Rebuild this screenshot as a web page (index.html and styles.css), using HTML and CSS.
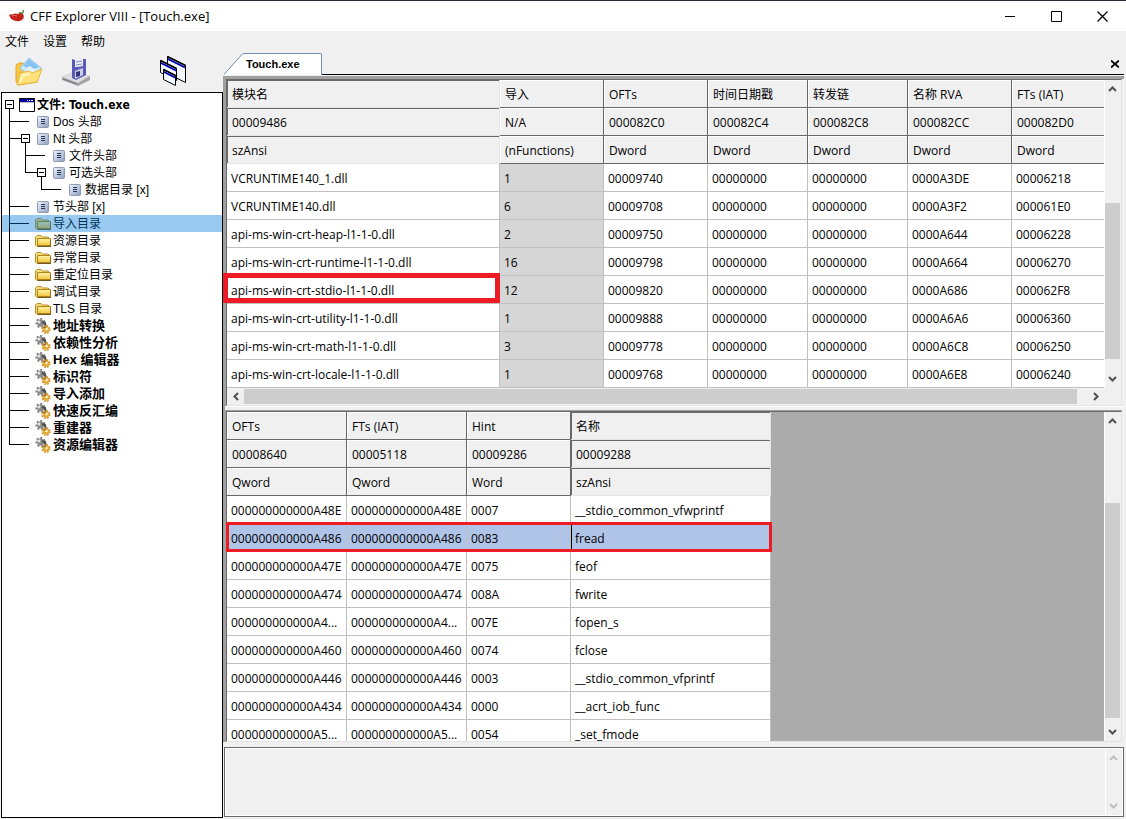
FILE: index.html
```html
<!DOCTYPE html>
<html lang="zh-CN">
<head>
<meta charset="utf-8">
<title>CFF Explorer VIII - [Touch.exe]</title>
<link rel="stylesheet" href="styles.css">
</head>
<body>
<svg class="defs" aria-hidden="true">
  <defs>
    <linearGradient id="docFill" x1="0" y1="0" x2="1" y2="1"><stop offset="0" stop-color="#f4f7fc"/><stop offset="1" stop-color="#8d9dbc"/></linearGradient>
    <linearGradient id="foldFill" x1="0" y1="0" x2="0" y2="1"><stop offset="0" stop-color="#fff6a8"/><stop offset="1" stop-color="#f2c23c"/></linearGradient>
  </defs>
  <symbol id="window" viewBox="0 0 16 14"><path d="M.5.5h15v13H.5z" fill="#fff" stroke="#000"/><path d="M1 1h14v3H1z" fill="#0000a0"/><path d="M8 2h1v1H8zM10 2h1v1h-1zM12 2h2v1h-2z" fill="#fff"/><path d="M1 4h14v1H1z" fill="#c0c0c0"/></symbol>
  <symbol id="doc" viewBox="0 0 12 12"><rect x=".5" y=".5" width="11" height="11" rx="1" fill="url(#docFill)" stroke="#8c9ab6"/><path d="M4 3.500h4M4 5.500h4M4 7.500h4" stroke="#25355c"/></symbol>
  <symbol id="folder" viewBox="0 0 16 16"><path d="M.5 12V4L2 2.500h4L7.500 4H13l1 1v8.500H2z" fill="#f8dc78" stroke="#b8912c"/><path d="M2.500 12.500V5.500H15.500V12.500z" fill="url(#foldFill)" stroke="#b08416"/><path d="M3 13.500h13V7" fill="none" stroke="#6f5a24"/></symbol>
  <symbol id="gears" viewBox="0 0 16 16"><circle cx="5.500" cy="5" r="3.500" fill="#8a8a8a"/><circle cx="5.500" cy="5" r="4.200" fill="none" stroke="#808080" stroke-width="1.800" stroke-dasharray="2 1.800"/><circle cx="4" cy="4" r="1.500" fill="#e4e4e4"/><path d="M7 4l3 1 1 5" fill="none" stroke="#4c4c4c" stroke-width="2"/><circle cx="11" cy="11.500" r="3.300" fill="#e3aa3c"/><circle cx="11" cy="11.500" r="3.800" fill="none" stroke="#cf9428" stroke-width="1.600" stroke-dasharray="1.700 1.300"/><circle cx="11.500" cy="11" r="1.300" fill="#fff3c8"/><path d="M8 9l3 1" stroke="#7a6234"/></symbol>
  <symbol id="up" viewBox="0 0 9 6"><path d="M1 5 4.500 1.500 8 5" fill="none" stroke="currentColor" stroke-width="2"/></symbol>
  <symbol id="down" viewBox="0 0 9 6"><path d="M1 1 4.500 4.500 8 1" fill="none" stroke="currentColor" stroke-width="2"/></symbol>
  <symbol id="left" viewBox="0 0 6 9"><path d="M5 1 1.500 4.500 5 8" fill="none" stroke="currentColor" stroke-width="2"/></symbol>
  <symbol id="right" viewBox="0 0 6 9"><path d="M1 1 4.500 4.500 1 8" fill="none" stroke="currentColor" stroke-width="2"/></symbol>
</svg>

<header class="titlebar">
  <svg class="app-icon" width="16" height="14" viewBox="0 0 16 14" aria-hidden="true"><path d="M0 5q2 1 4 0 3-1 5 0 2-2 4-1 3 3 1 6-3 3-7 2Q1 11 0 5z" fill="#c32218"/><path d="M3 7q3-1 5 0" fill="none" stroke="#f0786c"/><path d="M10 4q2-1 4 1M13 4q2-1 1-3" fill="none" stroke="#73843f" stroke-width="1.500"/></svg>
  <h1>CFF Explorer VIII - [Touch.exe]</h1>
  <button type="button" aria-label="最小化"><svg width="10" height="11"><path d="M0 5.500h10" stroke="#000"/></svg></button>
  <button type="button" aria-label="最大化"><svg width="11" height="11"><path d="M.5.5h10v10h-10z" fill="none" stroke="#000"/></svg></button>
  <button type="button" aria-label="关闭"><svg width="11" height="11"><path d="M.5.5l10 10M10.500.5l-10 10" stroke="#000" stroke-width="1.200"/></svg></button>
</header>

<div class="workspace">
  <div class="side">
    <nav class="menu"><button type="button">文件</button><button type="button">设置</button><button type="button">帮助</button></nav>
    <div class="toolbar">
      <button type="button" aria-label="打开"><svg width="30" height="30" viewBox="0 0 30 30"><path d="M2 8l3-2h4l2 3 12 4v12L5 28 2 25z" fill="#f5c64a" stroke="#e1a72a"/><path d="M6 11 15 1l12 10-9 10z" fill="#cfeafc" stroke="#8cc2ec"/><path d="M9 9l6-7 10 8-6 3z" fill="#86c2f2"/><path d="M10 15l5-6 10 5-7 6z" fill="#e3f3fe"/><path d="M3 28 6 16l9-2 3 2 10-4-5 13z" fill="#ffe37a" stroke="#e8b437"/><path d="M6 25l3-7 7-1" fill="none" stroke="#fff8c8" stroke-width="2"/></svg></button>
      <button type="button" aria-label="保存"><svg width="30" height="30" viewBox="0 0 30 30"><path d="M1 20 12 15l17 4v4L17 29 1 23z" fill="#a2a2a6"/><path d="M1 20 12 15l17 4-12 7z" fill="#dededf"/><path d="M2 22l14 5" stroke="#777"/><path d="M11 2l3 1v7l8-1V2h3v16l-10 5-4-2z" fill="#5959b8"/><path d="M14 3l8-1v7l-8 1z" fill="#e8ebf5"/><path d="M15 5l6-1M15 8l6-1" stroke="#8a8fc0"/><path d="M14 14l8-3v7l-8 4z" fill="#ccd0e4"/><path d="M15 15l4-1v5l-4 1z" fill="#34347c"/></svg></button>
      <button type="button" class="cascade" aria-label="层叠窗口"><svg width="28" height="31" viewBox="0 0 28 31"><path d="M8.500.5 26.500 9.500V26.500L8.500 17.500z" fill="#f4f8ff" stroke="#000"/><path d="M9 2l17 8.500v2L9 4z" fill="#0000b0"/><path d="M1.500 4.500 17.500 12.500V24.500L1.500 16.500z" fill="#f4f8ff" stroke="#000"/><path d="M2 6l15 7.500v2L2 8z" fill="#0000b0"/><path d="M4.500 13.500 16.500 19.500V29.500L4.500 23.500z" fill="#f4f8ff" stroke="#000"/><path d="M5 15l11 5.500v2L5 17z" fill="#0000b0"/><path d="M8.500.5l18 9M1.500 4.500l16 8M4.500 13.500l12 6" stroke="#000" stroke-width="1.500"/></svg></button>
    </div>
    <nav class="tree" aria-label="文件结构">
      <div class="node root"><button type="button" class="toggle" aria-label="折叠"></button><svg class="ico win"><use href="#window"/></svg><a href="#">文件: Touch.exe</a></div>
      <ul>
        <li><div class="node"><svg class="ico doc"><use href="#doc"/></svg><a href="#">Dos 头部</a></div></li>
        <li><div class="node"><button type="button" class="toggle" aria-label="折叠"></button><svg class="ico doc"><use href="#doc"/></svg><a href="#">Nt 头部</a></div>
          <ul>
            <li><div class="node"><svg class="ico doc"><use href="#doc"/></svg><a href="#">文件头部</a></div></li>
            <li><div class="node"><button type="button" class="toggle" aria-label="折叠"></button><svg class="ico doc"><use href="#doc"/></svg><a href="#">可选头部</a></div>
              <ul><li><div class="node"><svg class="ico doc"><use href="#doc"/></svg><a href="#">数据目录 [x]</a></div></li></ul>
            </li>
          </ul>
        </li>
        <li><div class="node"><svg class="ico doc"><use href="#doc"/></svg><a href="#">节头部 [x]</a></div></li>
        <li><div class="node selected"><svg class="ico"><use href="#folder"/></svg><a href="#" aria-current="true">导入目录</a></div></li>
        <li><div class="node"><svg class="ico"><use href="#folder"/></svg><a href="#">资源目录</a></div></li>
        <li><div class="node"><svg class="ico"><use href="#folder"/></svg><a href="#">异常目录</a></div></li>
        <li><div class="node"><svg class="ico"><use href="#folder"/></svg><a href="#">重定位目录</a></div></li>
        <li><div class="node"><svg class="ico"><use href="#folder"/></svg><a href="#">调试目录</a></div></li>
        <li><div class="node"><svg class="ico"><use href="#folder"/></svg><a href="#">TLS 目录</a></div></li>
        <li><div class="node tool"><svg class="ico"><use href="#gears"/></svg><a href="#">地址转换</a></div></li>
        <li><div class="node tool"><svg class="ico"><use href="#gears"/></svg><a href="#">依赖性分析</a></div></li>
        <li><div class="node tool"><svg class="ico"><use href="#gears"/></svg><a href="#">Hex 编辑器</a></div></li>
        <li><div class="node tool"><svg class="ico"><use href="#gears"/></svg><a href="#">标识符</a></div></li>
        <li><div class="node tool"><svg class="ico"><use href="#gears"/></svg><a href="#">导入添加</a></div></li>
        <li><div class="node tool"><svg class="ico"><use href="#gears"/></svg><a href="#">快速反汇编</a></div></li>
        <li><div class="node tool"><svg class="ico"><use href="#gears"/></svg><a href="#">重建器</a></div></li>
        <li><div class="node tool"><svg class="ico"><use href="#gears"/></svg><a href="#">资源编辑器</a></div></li>
      </ul>
    </nav>
  </div>

  <main class="content">
    <div class="tabs">
      <button type="button" class="tab"><svg class="slope" width="20" height="22" viewBox="0 0 20 22" aria-hidden="true"><path d="M0 22 18 2Q19 .5 20 .5V22z" fill="#fff"/><path d="M0 21.500 17 2.500Q18.500.5 20 .5" fill="none" stroke="#6f8fae"/></svg><span>Touch.exe</span></button>
      <div class="strip"><button type="button" aria-label="关闭标签"><svg width="8" height="8"><path d="M0 .5l8 7M8 .5l-8 7" stroke="#000" stroke-width="1.800"/></svg></button></div>
    </div>
    <div class="panes">
      <section class="pane modules">
        <div class="view">
          <table>
            <colgroup><col class="w-name"><col class="w-104"><col class="w-104"><col class="w-100"><col class="w-100"><col class="w-104"><col></colgroup>
            <thead>
              <tr><th class="sunk">模块名</th><th>导入</th><th>OFTs</th><th>时间日期戳</th><th>转发链</th><th>名称 RVA</th><th>FTs (IAT)</th></tr>
              <tr><th class="sunk">00009486</th><th>N/A</th><th>000082C0</th><th>000082C4</th><th>000082C8</th><th>000082CC</th><th>000082D0</th></tr>
              <tr><th class="sunk">szAnsi</th><th>(nFunctions)</th><th>Dword</th><th>Dword</th><th>Dword</th><th>Dword</th><th>Dword</th></tr>
            </thead>
            <tbody>
              <tr><td>VCRUNTIME140_1.dll</td><td>1</td><td>00009740</td><td>00000000</td><td>00000000</td><td>0000A3DE</td><td>00006218</td></tr>
              <tr><td>VCRUNTIME140.dll</td><td>6</td><td>00009708</td><td>00000000</td><td>00000000</td><td>0000A3F2</td><td>000061E0</td></tr>
              <tr><td>api-ms-win-crt-heap-l1-1-0.dll</td><td>2</td><td>00009750</td><td>00000000</td><td>00000000</td><td>0000A644</td><td>00006228</td></tr>
              <tr><td>api-ms-win-crt-runtime-l1-1-0.dll</td><td>16</td><td>00009798</td><td>00000000</td><td>00000000</td><td>0000A664</td><td>00006270</td></tr>
              <tr><td class="marked">api-ms-win-crt-stdio-l1-1-0.dll</td><td>12</td><td>00009820</td><td>00000000</td><td>00000000</td><td>0000A686</td><td>000062F8</td></tr>
              <tr><td>api-ms-win-crt-utility-l1-1-0.dll</td><td>1</td><td>00009888</td><td>00000000</td><td>00000000</td><td>0000A6A6</td><td>00006360</td></tr>
              <tr><td>api-ms-win-crt-math-l1-1-0.dll</td><td>3</td><td>00009778</td><td>00000000</td><td>00000000</td><td>0000A6C8</td><td>00006250</td></tr>
              <tr><td>api-ms-win-crt-locale-l1-1-0.dll</td><td>1</td><td>00009768</td><td>00000000</td><td>00000000</td><td>0000A6E8</td><td>00006240</td></tr>
            </tbody>
          </table>
        </div>
        <div class="vbar"><svg class="arrow-v"><use href="#up"/></svg><div class="track"><div class="thumb"></div></div><svg class="arrow-v"><use href="#down"/></svg></div>
        <div class="hbar"><svg class="arrow-h"><use href="#left"/></svg><div class="track"><div class="thumb"></div></div><svg class="arrow-h"><use href="#right"/></svg></div>
      </section>
      <div class="splitter"></div>
      <section class="pane functions">
        <div class="view">
          <table>
            <colgroup><col class="w-120"><col class="w-120"><col class="w-104"><col class="w-200"></colgroup>
            <thead>
              <tr><th>OFTs</th><th>FTs (IAT)</th><th>Hint</th><th class="sunk">名称</th></tr>
              <tr><th>00008640</th><th>00005118</th><th>00009286</th><th class="sunk">00009288</th></tr>
              <tr><th>Qword</th><th>Qword</th><th>Word</th><th class="sunk">szAnsi</th></tr>
            </thead>
            <tbody>
              <tr><td>000000000000A48E</td><td>000000000000A48E</td><td>0007</td><td>__stdio_common_vfwprintf</td></tr>
              <tr class="current"><td>000000000000A486</td><td>000000000000A486</td><td>0083</td><td>fread</td></tr>
              <tr><td>000000000000A47E</td><td>000000000000A47E</td><td>0075</td><td>feof</td></tr>
              <tr><td>000000000000A474</td><td>000000000000A474</td><td>008A</td><td>fwrite</td></tr>
              <tr><td>000000000000A4...</td><td>000000000000A4...</td><td>007E</td><td>fopen_s</td></tr>
              <tr><td>000000000000A460</td><td>000000000000A460</td><td>0074</td><td>fclose</td></tr>
              <tr><td>000000000000A446</td><td>000000000000A446</td><td>0003</td><td>__stdio_common_vfprintf</td></tr>
              <tr><td>000000000000A434</td><td>000000000000A434</td><td>0000</td><td>__acrt_iob_func</td></tr>
              <tr><td>000000000000A5...</td><td>000000000000A5...</td><td>0054</td><td>_set_fmode</td></tr>
            </tbody>
          </table>
        </div>
        <div class="vbar"><svg class="arrow-v"><use href="#up"/></svg><div class="track"><div class="thumb"></div></div><svg class="arrow-v"><use href="#down"/></svg></div>
      </section>
    </div>
    <div class="log">
      <textarea readonly aria-label="输出"></textarea>
      <div class="vbar off"><svg class="arrow-v"><use href="#up"/></svg><div class="track"></div><svg class="arrow-v"><use href="#down"/></svg></div>
    </div>
  </main>
</div>
</body>
</html>
```

FILE: styles.css
```css
* { box-sizing: border-box; }

body {
  margin: 0;
  height: 100vh;
  display: flex;
  flex-direction: column;
  overflow: hidden;
  background: #f0f0f0;
  color: #000;
  border-top: 1px solid #2b2b3a;
  font: 12px/16px "Open Sans", "Noto Sans CJK SC", sans-serif;
}

button {
  margin: 0;
  padding: 0;
  border: 0;
  background: none;
  color: inherit;
  font: inherit;
}

a { color: inherit; text-decoration: none; }
svg { display: block; flex: none; }
.defs { position: absolute; width: 0; height: 0; }

/* Title bar */
.titlebar {
  display: flex;
  align-items: center;
  height: 30px;
  padding: 0 1px 0 9px;
  background: #fff;
}
.titlebar h1 {
  flex: 1;
  margin: 0 0 0 5px;
  font-size: 13px;
  font-weight: 400;
}
.titlebar button {
  display: grid;
  place-items: center;
  width: 46px;
  height: 30px;
}

.workspace {
  flex: 1;
  min-height: 0;
  display: grid;
  grid-template-columns: 223px minmax(0, 1fr);
}

/* Left side */
.side {
  display: flex;
  flex-direction: column;
  min-height: 0;
  padding: 0 0 1px 1px;
}
.menu {
  display: flex;
  gap: 14px;
  height: 20px;
  padding-left: 4px;
  font-family: "Noto Sans CJK SC", sans-serif;
}
.toolbar {
  display: flex;
  align-items: center;
  gap: 17px;
  height: 41px;
  padding-left: 13px;
}
.toolbar .cascade { margin-left: 51px; }

.tree {
  flex: 1;
  min-height: 0;
  overflow: hidden;
  padding-top: 3px;
  border: 1px solid #000;
  background: #fff;
  font-family: "Liberation Sans", "Noto Sans CJK SC", sans-serif;
}
.tree ul { margin: 0; padding: 0; list-style: none; }
.tree > ul { margin-left: 7px; }
.tree ul ul { margin-left: 16px; }
.tree li { position: relative; }
.tree li::before {
  content: "";
  position: absolute;
  left: 0;
  top: -4px;
  bottom: 0;
  border-left: 1px solid #000;
}
.tree li:last-child::before { bottom: auto; height: 13px; }
.node {
  position: relative;
  display: flex;
  align-items: center;
  gap: 2px;
  height: 17px;
  padding-left: 26px;
  white-space: nowrap;
}
.node a { padding-top: 1px; }
.node::before {
  content: "";
  position: absolute;
  left: 0;
  top: 8px;
  width: 20px;
  border-top: 1px solid #000;
}
.node .toggle {
  position: absolute;
  left: 12px;
  top: 4px;
  width: 9px;
  height: 9px;
  border: 1px solid #000;
  background: linear-gradient(#000, #000) center / 5px 1px no-repeat #fff;
}
.node.root {
  gap: 2px;
  padding-left: 17px;
  font-family: "DejaVu Sans Condensed", "Noto Sans CJK SC", sans-serif;
  font-weight: 700;
}
.node.root::before { display: none; }
.node.root .toggle { left: 3px; }
.node.tool {
  font-size: 13px;
  font-weight: 700;
}
.node.selected::after {
  content: "";
  position: absolute;
  inset: 0 0 0 -7px;
  background: rgba(0, 120, 215, .4);
}
.ico { width: 16px; height: 16px; }
.ico.win { height: 14px; }
.ico.doc { height: 12px; }

/* Right side */
.content {
  display: flex;
  flex-direction: column;
  min-width: 0;
  min-height: 0;
  padding: 22px 2px 2px 0;
}
.tabs { display: flex; height: 23px; }
.tab {
  display: flex;
  padding-left: 1px;
  font: 700 11px/20px "Liberation Sans", sans-serif;
}
.tab span {
  height: 22px;
  padding: 0 21px 0 2px;
  border-top: 1px solid #6f8fae;
  border-right: 1px solid #6f8fae;
  border-top-right-radius: 2px;
  background: #fff;
}
.strip {
  flex: 1;
  display: flex;
  justify-content: flex-end;
  align-items: center;
  height: 22px;
  padding-right: 5px;
  border-bottom: 1px solid #000;
}

.panes {
  flex: 1;
  min-height: 0;
  display: flex;
  flex-direction: column;
  border: solid #a0a0a0;
  border-width: 3px 0 0 3px;
}
.pane {
  display: grid;
  grid-template-columns: minmax(0, 1fr) 17px;
  margin-right: 2px;
  border: 1px solid #696969;
  border-right-color: #e3e3e3;
  border-bottom-color: #e3e3e3;
}
.hbar, .vbar {
  display: flex;
  align-items: center;
  background: #f0f0f0;
  color: #505050;
}
.hbar { height: 17px; gap: 5px; padding: 0 5px 0 6px; }
.vbar {
  flex-direction: column;
  gap: 5px;
  min-height: 0;
  padding: 6px 0;
  box-shadow: inset 1px 0 #fff;
}
.track { flex: 1; min-width: 0; min-height: 0; }
.thumb { background: #cdcdcd; }
.vbar .thumb { width: 15px; }
.hbar .thumb { height: 15px; width: 98.7%; }
.arrow-v { width: 9px; height: 6px; }
.arrow-h { width: 6px; height: 9px; }
.modules .vbar .track,
.functions .vbar .track {
  display: flex;
  flex-direction: column;
  justify-content: flex-end;
}
.modules .vbar .thumb { height: 57%; margin-bottom: 12px; }
.functions .vbar .thumb { height: 73%; margin-bottom: 6px; }

.splitter {
  height: 4px;
  flex: none;
  margin-left: -1px;
  background: #f0f0f0;
  border-top: 1px solid #fff;
}
.functions {
  flex: 1;
  min-height: 0;
  grid-template-rows: minmax(0, 1fr);
  box-shadow: 0 -1px #a0a0a0;
  margin-top: 1px;
}
.functions .view {
  min-height: 0;
  background: #ababab;
  clip-path: inset(0 0 0 -4px);
}

table {
  table-layout: fixed;
  border-collapse: separate;
  border-spacing: 0;
}
.modules table { width: 100%; }
.functions table { width: 544px; }
.w-name { width: 273px; }
.w-100 { width: 100px; }
.w-104 { width: 104px; }
.w-120 { width: 120px; }
.w-200 { width: 200px; }
th, td {
  height: 28px;
  padding: 2px 0 0 4px;
  text-align: left;
  font-weight: 400;
  white-space: nowrap;
}
th {
  padding-left: 5px;
  border: solid #696969;
  border-width: 0 1px 1px 0;
  background: #f0f0f0;
  box-shadow: inset 1px 1px #fff;
}
th.sunk {
  border-color: #e3e3e3;
  box-shadow: inset 1px 1px #696969;
}
td {
  border: solid #c0c0c0;
  border-width: 0 1px 1px 0;
  background: #fff;
}
.modules th:last-child, .modules td:last-child { border-right: 0; }
.modules td:nth-child(2) { background: #d6d6d6; }

.marked { position: relative; }
.marked::after {
  content: "";
  position: absolute;
  inset: -3px -1px 0 -4px;
  border: 5px solid #ed1c24;
}
.current { position: relative; }
.current td { background: #b0c4e8; }
.current td:last-child { box-shadow: inset 1px 0 #000; }
.current td:first-child::after {
  content: "";
  position: absolute;
  inset: -2px -1px 0 -1px;
  border: 3px solid #ed1c24;
}

/* Output box */
.log {
  display: flex;
  flex: none;
  height: 70px;
  margin: 5px 0 0 1px;
  border: 1px solid #696969;
  box-shadow: inset 0 0 0 1px #fff;
  padding: 1px;
}
.log textarea {
  flex: 1;
  resize: none;
  border: 0;
  padding: 2px;
  background: transparent;
  font: inherit;
  outline: 0;
}
.log .vbar { width: 17px; }
.log .off { color: #bfbfbf; }
```
